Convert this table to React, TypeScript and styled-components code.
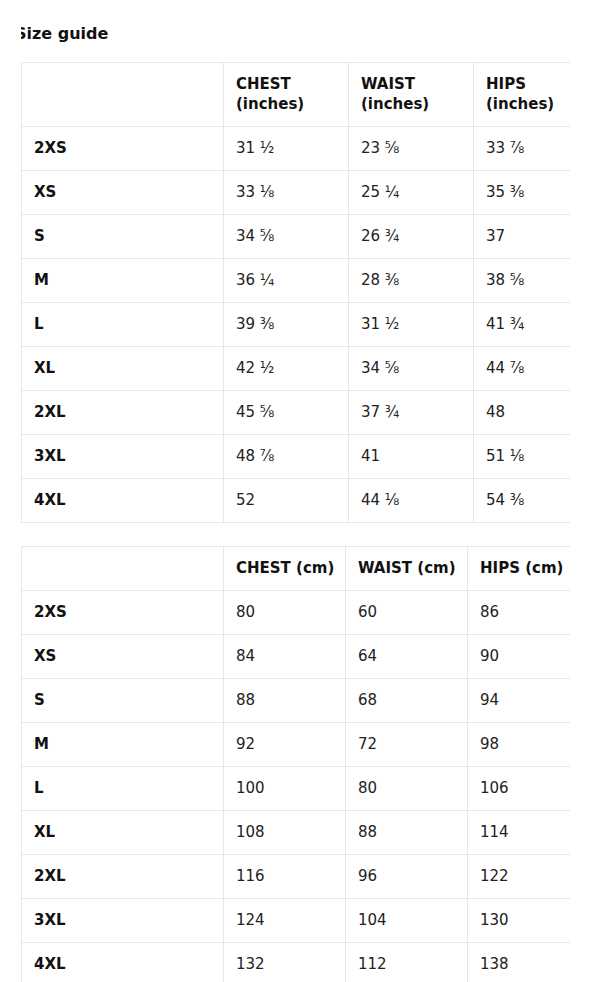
import React from 'react';
import styled, { createGlobalStyle } from 'styled-components';

type Row = [string, string, string, string];

interface SizeTableProps {
	headers: string[];
	widths: number[];
	rows: Row[];
	tall?: boolean;
}

const inchRows: Row[] = [
	['2XS', '31 ½', '23 ⅝', '33 ⅞'],
	['XS', '33 ⅛', '25 ¼', '35 ⅜'],
	['S', '34 ⅝', '26 ¾', '37'],
	['M', '36 ¼', '28 ⅜', '38 ⅝'],
	['L', '39 ⅜', '31 ½', '41 ¾'],
	['XL', '42 ½', '34 ⅝', '44 ⅞'],
	['2XL', '45 ⅝', '37 ¾', '48'],
	['3XL', '48 ⅞', '41', '51 ⅛'],
	['4XL', '52', '44 ⅛', '54 ⅜'],
];

const cmRows: Row[] = [
	['2XS', '80', '60', '86'],
	['XS', '84', '64', '90'],
	['S', '88', '68', '94'],
	['M', '92', '72', '98'],
	['L', '100', '80', '106'],
	['XL', '108', '88', '114'],
	['2XL', '116', '96', '122'],
	['3XL', '124', '104', '130'],
	['4XL', '132', '112', '138'],
];

const GlobalStyle = createGlobalStyle`
	html, body {
		margin: 0;
		padding: 0;
		background: #ffffff;
	}
	body {
		font-family: 'DejaVu Sans', 'Liberation Sans', sans-serif;
		color: #111111;
	}
`;

const Page = styled.div`
	padding: 23px 20px 0 21px;
	height: 982px;
	box-sizing: border-box;
	overflow: hidden;
`;

const Title = styled.h2`
	margin: 0 0 17px;
	font-size: 16px;
	line-height: 22px;
	font-weight: bold;
	text-indent: -6px;
	overflow: hidden;
	white-space: nowrap;
`;

const TableWrap = styled.div`
	width: 549px;
	overflow: hidden;
	margin-bottom: 23px;
`;

const Table = styled.table`
	border-collapse: collapse;
	table-layout: fixed;
	font-size: 15px;
`;

const HeadCell = styled.th<{ $tall?: boolean }>`
	border: 1px solid #e6e6e6;
	padding: 12px 12px;
	line-height: ${(p) => (p.$tall ? '19.5px' : '19px')};
	text-align: left;
	vertical-align: middle;
	font-weight: bold;
	white-space: ${(p) => (p.$tall ? 'normal' : 'nowrap')};
`;

const SizeCell = styled.td`
	border: 1px solid #e6e6e6;
	padding: 12px 12px 12px;
	line-height: 19px;
	font-weight: bold;
	vertical-align: middle;
`;

const ValueCell = styled.td`
	border: 1px solid #e6e6e6;
	padding: 12px 12px;
	line-height: 19px;
	vertical-align: middle;
	white-space: nowrap;
	color: #222222;
`;

const SizeTable: React.FC<SizeTableProps> = ({ headers, widths, rows, tall }) => (
	<TableWrap>
		<Table style={{ width: widths.reduce((a, b) => a + b, 0) }}>
			<colgroup>
				{widths.map((w, i) => (
					<col key={i} style={{ width: w }} />
				))}
			</colgroup>
			<thead>
				<tr>
					<HeadCell $tall={tall} />
					{headers.map((h) => (
						<HeadCell key={h} $tall={tall}>
							{h}
						</HeadCell>
					))}
				</tr>
			</thead>
			<tbody>
				{rows.map((row) => (
					<tr key={row[0]}>
						<SizeCell>{row[0]}</SizeCell>
						{row.slice(1).map((v, i) => (
							<ValueCell key={i}>{v}</ValueCell>
						))}
					</tr>
				))}
			</tbody>
		</Table>
	</TableWrap>
);

export default function App() {
	return (
		<>
			<GlobalStyle />
			<Page>
				<Title>Size guide</Title>
				<SizeTable
					tall
					headers={['CHEST (inches)', 'WAIST (inches)', 'HIPS (inches)']}
					widths={[202, 125, 125, 125]}
					rows={inchRows}
				/>
				<SizeTable
					headers={['CHEST (cm)', 'WAIST (cm)', 'HIPS (cm)']}
					widths={[202, 122, 122, 131]}
					rows={cmRows}
				/>
			</Page>
		</>
	);
}
